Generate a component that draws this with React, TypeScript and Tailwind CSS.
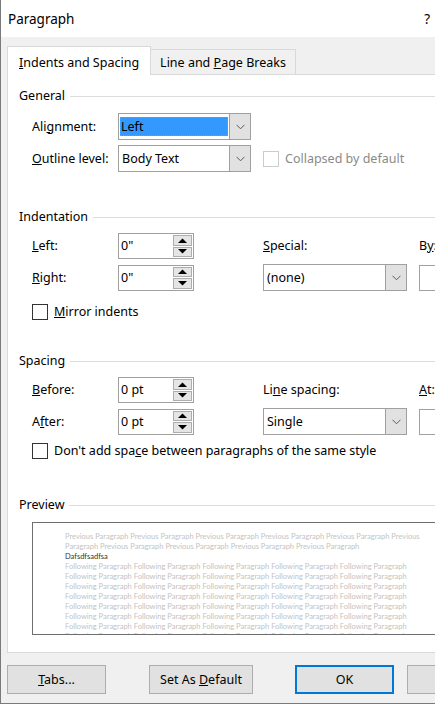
import React from "react";

const Chevron = () => (
  <svg width="9" height="6" viewBox="0 0 9 6" className="block">
    <path d="M0.5 0.8 L4.5 4.8 L8.5 0.8" fill="none" stroke="#5a5a5a" strokeWidth="1" />
  </svg>
);

function Combo({ value, wide, selected }: { value: string; wide?: boolean; selected?: boolean }) {
  return (
    <div
      className={
        wide
          ? "flex h-[27px] w-[144px] shrink-0 border border-[#a0a0a0] bg-white"
          : "flex h-[27px] w-[133px] shrink-0 border border-[#a0a0a0] bg-white"
      }
    >
      <div className="flex flex-1 items-center p-[1px]">
        {selected ? (
          <div className="flex h-[19px] w-full items-center bg-[#3399ff] pl-[1px] text-black outline outline-1 outline-dotted outline-[#d08a3a] -outline-offset-1">
            {value}
          </div>
        ) : (
          <div className="pl-[2px]">{value}</div>
        )}
      </div>
      <div className="flex w-[21px] items-center justify-center border-l border-[#a0a0a0] bg-[#e1e1e1]">
        <Chevron />
      </div>
    </div>
  );
}

const Up = () => (
  <svg width="9" height="5" viewBox="0 0 9 5" className="block">
    <polygon points="0,5 9,5 4.5,0.5" fill="#000" />
  </svg>
);
const Down = () => (
  <svg width="9" height="5" viewBox="0 0 9 5" className="block">
    <polygon points="0,0 9,0 4.5,4.5" fill="#000" />
  </svg>
);

function Spin({ value }: { value: string }) {
  return (
    <div className="flex h-[26px] w-[76px] shrink-0 border border-[#a0a0a0] bg-white">
      <div className="flex flex-1 items-center pl-[2px]">{value}</div>
      <div className="flex w-[20px] flex-col gap-[1px] py-[1px] pr-[1px]">
        <div className="flex flex-1 items-center justify-center border border-[#adadad] bg-[#e5e5e5]">
          <Up />
        </div>
        <div className="flex flex-1 items-center justify-center border border-[#adadad] bg-[#e5e5e5]">
          <Down />
        </div>
      </div>
    </div>
  );
}

function Header({ title }: { title: string }) {
  return (
    <div className="flex h-[16px] items-center pl-[11px]">
      <span className="pr-[5px]">{title}</span>
      <div className="h-px flex-1 bg-[#dcdcdc]" />
    </div>
  );
}

function Check({ disabled }: { disabled?: boolean }) {
  return (
    <div
      className={
        disabled
          ? "h-[16px] w-[16px] shrink-0 border border-[#cccccc] bg-white"
          : "h-[16px] w-[16px] shrink-0 border border-[#333333] bg-white"
      }
    />
  );
}

const prev1 = "Previous Paragraph Previous Paragraph Previous Paragraph Previous Paragraph Previous Paragraph Previous";
const prev2 = "Paragraph Previous Paragraph Previous Paragraph Previous Paragraph Previous Paragraph";
const foll = "Following Paragraph Following Paragraph Following Paragraph Following Paragraph Following Paragraph";

export default function App() {
  return (
    <div className="relative h-[704px] w-[435px] overflow-hidden border-b border-l border-[#7a7a7a] bg-[#f0f0f0] font-['Noto_Sans',sans-serif] text-[12.5px] leading-[16px] text-black">
      {/* title bar */}
      <div className="flex h-[37px] items-center justify-between bg-white pl-[7px] pr-[5px] text-[13.5px]">
        <span>Paragraph</span>
        <span>?</span>
      </div>

      {/* tabs */}
      <div className="flex items-end pl-[6px] pt-[9px]">
        <div className="relative z-10 -mb-px flex h-[29px] w-[144px] shrink-0 items-center border border-b-0 border-[#d9d9d9] bg-white pl-[11px] pt-[3px]">
          <span className="whitespace-nowrap">
            <u>I</u>ndents and Spacing
          </span>
        </div>
        <div className="flex h-[25px] w-[145px] shrink-0 items-center justify-center border border-b-0 border-l-0 border-[#d9d9d9] bg-[#f0f0f0] pt-[1px]">
          <span className="whitespace-nowrap">
            Line and <u>P</u>age Breaks
          </span>
        </div>
      </div>

      {/* panel */}
      <div className="ml-[6px] h-[579px] w-[460px] border border-[#d9d9d9] bg-white">
        <div className="mt-[13px]">
          <Header title="General" />
        </div>

        <div className="mt-[9px] flex items-center pl-[24px]">
          <div className="w-[86px] shrink-0">
            Ali<u>g</u>nment:
          </div>
          <Combo value="Left" selected />
        </div>
        <div className="mt-[5px] flex items-center pl-[24px]">
          <div className="w-[86px] shrink-0">
            <u>O</u>utline level:
          </div>
          <Combo value="Body Text" />
          <div className="ml-[12px] flex items-center whitespace-nowrap text-[#8a8a8a]">
            <Check disabled />
            <span className="ml-[6px]">Collapsed by default</span>
          </div>
        </div>

        <div className="mt-[37px]">
          <Header title="Indentation" />
        </div>
        <div className="mt-[8px] flex items-center pl-[24px]">
          <div className="w-[86px] shrink-0">
            <u>L</u>eft:
          </div>
          <Spin value={'0"'} />
          <div className="ml-[69px] w-[156px] shrink-0">
            <u>S</u>pecial:
          </div>
          <div className="whitespace-nowrap">
            B<u>y</u>:
          </div>
        </div>
        <div className="mt-[5px] flex items-center pl-[24px]">
          <div className="w-[86px] shrink-0">
            <u>R</u>ight:
          </div>
          <Spin value={'0"'} />
          <div className="ml-[69px] shrink-0">
            <Combo value="(none)" wide />
          </div>
          <div className="ml-[12px] h-[26px] w-[40px] shrink-0 border border-[#a0a0a0] bg-white" />
        </div>
        <div className="mt-[13px] flex items-center pl-[24px]">
          <Check />
          <span className="ml-[6px]">
            <u>M</u>irror indents
          </span>
        </div>

        <div className="mt-[33px]">
          <Header title="Spacing" />
        </div>
        <div className="mt-[8px] flex items-center pl-[24px]">
          <div className="w-[86px] shrink-0">
            <u>B</u>efore:
          </div>
          <Spin value="0 pt" />
          <div className="ml-[69px] w-[156px] shrink-0">
            Li<u>n</u>e spacing:
          </div>
          <div className="whitespace-nowrap">
            <u>A</u>t:
          </div>
        </div>
        <div className="mt-[5px] flex items-center pl-[24px]">
          <div className="w-[86px] shrink-0">
            A<u>f</u>ter:
          </div>
          <Spin value="0 pt" />
          <div className="ml-[69px] shrink-0">
            <Combo value="Single" wide />
          </div>
          <div className="ml-[12px] h-[26px] w-[40px] shrink-0 border border-[#a0a0a0] bg-white" />
        </div>
        <div className="mt-[8px] flex items-center pl-[24px]">
          <Check />
          <span className="ml-[6px] whitespace-nowrap">
            Don't add spa<u>c</u>e between paragraphs of the same style
          </span>
        </div>

        <div className="mt-[38px]">
          <Header title="Preview" />
        </div>
        <div className="ml-[24px] mt-[9px] h-[113px] w-[420px] overflow-hidden border border-[#6e6e6e] bg-white pl-[32px] pt-[9px] font-['Lato',sans-serif] text-[7.5px] leading-[10px]">
          <div className="whitespace-nowrap text-[#c3c3c3]">{prev1}</div>
          <div className="whitespace-nowrap text-[#c3c3c3]">{prev2}</div>
          <div className="whitespace-nowrap text-[#333333]">Dafsdfsadfsa</div>
          {[0, 1, 2, 3, 4, 5, 6, 7].map((i) => (
            <div key={i} className="whitespace-nowrap text-[#c3c3c3]">
              {foll}
            </div>
          ))}
        </div>
      </div>

      {/* buttons */}
      <div className="mt-[12px] flex pl-[6px]">
        <div className="flex h-[29px] w-[99px] shrink-0 items-center justify-center whitespace-nowrap border border-[#adadad] bg-[#e1e1e1]">
          <span>
            <u>T</u>abs...
          </span>
        </div>
        <div className="ml-[43px] flex h-[29px] w-[104px] shrink-0 items-center justify-center whitespace-nowrap border border-[#adadad] bg-[#e1e1e1]">
          <span>
            Set As <u>D</u>efault
          </span>
        </div>
        <div className="ml-[42px] flex h-[29px] w-[99px] shrink-0 items-center justify-center whitespace-nowrap border-2 border-[#0078d7] bg-[#e1e1e1]">
          <span>OK</span>
        </div>
        <div className="ml-[13px] flex h-[29px] w-[99px] shrink-0 items-center justify-center whitespace-nowrap border border-[#adadad] bg-[#e1e1e1]">
          <span>Cancel</span>
        </div>
      </div>
    </div>
  );
}
